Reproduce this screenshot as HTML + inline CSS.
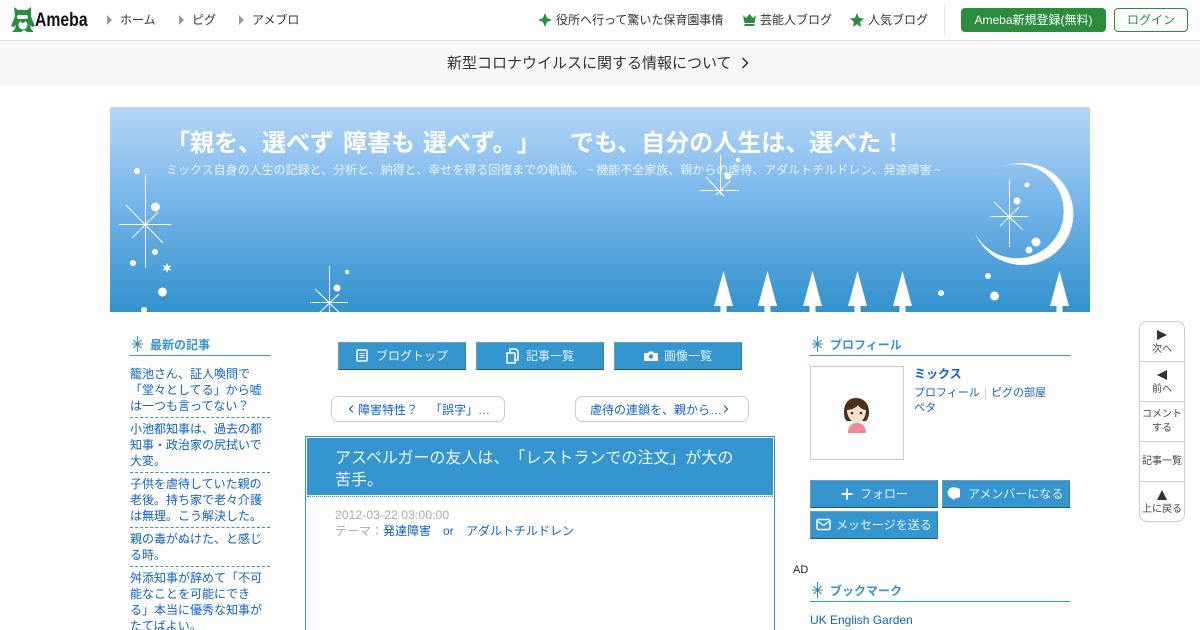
<!DOCTYPE html>
<html lang="ja"><head><meta charset="utf-8"><title>アスペルガーの友人は</title>
<style>
html,body{margin:0;padding:0;background:#fff;width:1200px;height:630px;overflow:hidden}
body{position:relative;font-family:"Liberation Sans","WenQuanYi Zen Hei","Noto Sans CJK JP",sans-serif;font-size:12px;color:#333;text-spacing-trim:space-all}
.t{position:absolute;white-space:nowrap;line-height:16px}
.a{position:absolute}
.l{color:#0e63c9}
.btn{position:absolute;box-sizing:border-box;height:28px;background:#3595cf;border:1px solid #6f9db9;border-bottom-color:#24566f;border-right-color:#4b7a94;color:#e8f3fa;line-height:26px;text-align:center;white-space:nowrap}
.hd{position:absolute;border-bottom:1px solid #3595cf;height:22px;line-height:20px;font-weight:bold;color:#3595cf}
.pn{position:absolute;box-sizing:border-box;top:396px;height:26px;width:174px;border:1px solid #ccc;border-radius:7px}
.dash{position:absolute;left:130px;width:140px;border-top:1px dashed #3595cf}
.c{position:absolute;left:1139px;width:46px;text-align:center;font-size:10px;line-height:14px;color:#444}
.s{position:absolute;left:1140px;width:44px;height:1px;background:#ccc}
.w{display:inline-block;width:12px;text-align:center}
</style></head><body>

<!-- header -->
<div class="a" style="left:0;top:40px;width:1200px;height:1px;background:#dedede"></div>
<div class="a" style="left:0;top:41px;width:1200px;height:44px;background:#f7f7f7"></div>
<svg class="a" style="left:11px;top:6px" width="24" height="28" viewBox="0 0 24 28">
<path fill="#2a8c3c" d="M3 1l4 3h9l4-3v9l1 3 3 7-3 1-2-2 1 4 3 3h-7l-3-2-3 2H1l3-3 1-4-2 2-3-1 3-7 1-3z"/>
<circle cx="12" cy="19" r="4.500" fill="#fff"/><rect x="6" y="9" width="11" height="4" rx="2" fill="#fff"/><circle cx="12" cy="15" r="2" fill="#2a8c3c"/>
</svg>
<div class="t" style="left:35px;top:10px;font-size:19px;line-height:22px;font-weight:bold;color:#111;transform:scaleX(.83);transform-origin:0 0">Ameba</div>
<svg class="a" style="left:0;top:0" width="300" height="40"><path fill="#999" d="M107 15l5 5-5 5zM179 15l5 5-5 5zM239 15l5 5-5 5z"/></svg>
<div class="t" style="left:120px;top:12px">ホーム</div>
<div class="t" style="left:192px;top:12px">ピグ</div>
<div class="t" style="left:252px;top:12px">アメブロ</div>
<svg class="a" style="left:530px;top:0" width="340" height="40"><path fill="#2a8c3c" d="M15 13l2 5 5 2-5 2-2 5-2-5-5-2 5-2zM213 15l3 3 3.500-4 3.500 4 3-3-1.500 8h-10zM214.500 24h10v2h-10zM327 13l2 5 5 .5-4 3.500 1.200 5-4.200-2.800-4.200 2.800 1.200-5-4-3.500 5-.5z"/></svg>
<div class="t" style="left:556px;top:12px">役所へ行って驚いた保育園事情</div>
<div class="t" style="left:760px;top:12px">芸能人ブログ</div>
<div class="t" style="left:868px;top:12px">人気ブログ</div>
<div class="a" style="left:944px;top:4px;width:1px;height:32px;background:#e6e6e6"></div>
<div class="a" style="left:961px;top:8px;width:145px;height:24px;background:#2a8c3c;border-radius:4px;color:#fff;text-align:center;line-height:24px;white-space:nowrap">Ameba新規登録(無料)</div>
<div class="a" style="left:1114px;top:8px;width:72px;height:22px;border:1px solid #2a8c3c;border-radius:4px;color:#2a8c3c;text-align:center;line-height:22px">ログイン</div>
<div class="t" style="left:447px;top:54px;font-size:15px;line-height:20px;color:#333">新型コロナウイルスに関する情報について</div>
<svg class="a" style="left:738px;top:55px" width="14" height="16"><path d="M4.500 3l5 5-5 5" fill="none" stroke="#333" stroke-width="1.500"/></svg>

<!-- banner -->
<svg class="a" style="left:0;top:0" width="1200" height="320">
<defs><linearGradient id="g" x1="0" y1="0" x2="0" y2="1"><stop offset="0" stop-color="#b5d6f9"/><stop offset=".5" stop-color="#71b3e8"/><stop offset="1" stop-color="#3292cd"/></linearGradient>
<clipPath id="cb"><rect x="110" y="107" width="980" height="205"/></clipPath></defs>
<rect x="110" y="107" width="980" height="205" fill="url(#g)"/>
<g clip-path="url(#cb)">
<g stroke="#fff" stroke-width="1" fill="none">
<path d="M145.500 174V268M119 224.500H171M126 205L163 243M132 238L158 212"/>
<path d="M329.500 266V330M310 302.500H348M315 289L345 318M339 294L318 314"/>
<path d="M720.500 155V195M700 190.500H739M706 177L724 196M730 181L716 195"/>
<path d="M1009.500 179V247M990 216.500H1028M994 202L1023 230M1000 226L1019 207"/>
</g>
<g fill="#fff">
<circle cx="137" cy="171" r="3"/><circle cx="155.500" cy="207" r="4.500"/><circle cx="155" cy="252" r="3"/><circle cx="133" cy="263" r="3"/><circle cx="162.500" cy="292" r="4.500"/><circle cx="144" cy="310" r="3"/>
<path d="M167 263l1.200 3 3.200-.6-2.200 2.500 2.200 2.600-3.200-.7-1.200 3-1.200-3-3.200.7 2.200-2.600-2.200-2.500 3.200.6z"/>
<circle cx="337" cy="288" r="3.500"/><circle cx="347" cy="272" r="2.200"/>
<circle cx="728" cy="176" r="3.500"/><circle cx="738" cy="160" r="2.200"/>
<path d="M995 169.500Q1009 163 1022 163A51 51 0 1 1 975 233A47 47 0 1 0 995 169.500z"/>
<circle cx="1027" cy="185" r="2.500"/><circle cx="1017" cy="201" r="3.500"/><circle cx="1036" cy="242" r="4.500"/><circle cx="1029" cy="250" r="3.500"/><circle cx="988" cy="276" r="3"/><circle cx="994.500" cy="296" r="4.500"/><circle cx="941" cy="293" r="3"/>
<path d="M723.500 271l9.500 35h-6.500v6h-6v-6H714zM767.500 271l9.500 35h-6.500v6h-6v-6H758zM812.500 271l9.500 35h-6.500v6h-6v-6H803zM857.500 271l9.500 35h-6.500v6h-6v-6H848zM902.500 271l9.500 35h-6.500v6h-6v-6H893zM1059.500 271l9.500 35h-6.500v6h-6v-6H1050z"/>
</g></g></svg>
<div class="t" style="left:166px;top:128px;font-size:24px;line-height:32px;font-weight:bold;color:#fff">「親を、選べず</div>
<div class="t" style="left:343px;top:128px;font-size:24px;line-height:32px;font-weight:bold;color:#fff">障害も</div>
<div class="t" style="left:423px;top:128px;font-size:24px;line-height:32px;font-weight:bold;color:#fff">選べず。」</div>
<div class="t" style="left:570px;top:128px;font-size:24px;line-height:32px;font-weight:bold;color:#fff">でも、自分の人生は、選べた！</div>
<div class="t" style="left:166px;top:162px;color:#e6f2fc">ミックス自身の人生の記録と、分析と、納得と、幸せを得る回復までの軌跡。<span class="w">~</span>機能不全家族、親からの虐待、アダルトチルドレン、発達障害<span class="w">~</span></div>

<!-- left column -->
<svg class="a" style="left:0;top:330px" width="1100" height="280"><g stroke="#2f8db5" stroke-width="1" fill="none"><path d="M137.500 6V22M132 14H143M133.500 10L141.500 18M141.500 10L133.500 18"/><path d="M817.500 6V22M812 14H823M813.500 10L821.500 18M821.500 10L813.500 18"/><path d="M817.500 252V268M812 260H823M813.500 256L821.500 264M821.500 256L813.500 264"/></g></svg>
<div class="hd" style="left:130px;top:333px;width:140px;text-indent:20px;line-height:24px">最新の記事</div>
<div class="t l" style="left:130px;top:366px">籠池さん、証人喚問で<br>「堂々としてる」から嘘<br>は一つも言ってない？</div>
<div class="dash" style="top:417px"></div>
<div class="t l" style="left:130px;top:421px">小池都知事は、過去の都<br>知事・政治家の尻拭いで<br>大変。</div>
<div class="dash" style="top:472px"></div>
<div class="t l" style="left:130px;top:476px">子供を虐待していた親の<br>老後。持ち家で老々介護<br>は無理。こう解決した。</div>
<div class="dash" style="top:527px"></div>
<div class="t l" style="left:130px;top:531px">親の毒がぬけた、と感じ<br>る時。</div>
<div class="dash" style="top:566px"></div>
<div class="t l" style="left:130px;top:570px">舛添知事が辞めて「不可<br>能なことを可能にでき<br>る」本当に優秀な知事が<br>たてばよい。</div>

<!-- center -->
<div class="btn" style="left:338px;top:342px;width:128px"></div>
<div class="btn" style="left:476px;top:342px;width:128px"></div>
<div class="btn" style="left:614px;top:342px;width:128px"></div>
<div class="t" style="left:376px;top:348px;color:#e8f3fa">ブログトップ</div>
<div class="t" style="left:526px;top:348px;color:#e8f3fa">記事一覧</div>
<div class="t" style="left:664px;top:348px;color:#e8f3fa">画像一覧</div>
<svg class="a" style="left:350px;top:345px" width="390" height="22" fill="none" stroke="#fff" stroke-width="1.500">
<rect x="7" y="5" width="10" height="11" rx="1"/><path d="M9.500 8.500h5M9.500 10.500h5M9.500 12.500h5" stroke-width="1"/>
<path d="M157 8h7a1 1 0 0 1 1 1v9h-8zM160 8V4h6l2 2v9h-3"/>
<path fill="#fff" stroke="none" d="M295 8h3l1-1.500h4l1 1.500h3a1 1 0 0 1 1 1v6a1 1 0 0 1-1 1h-12a1 1 0 0 1-1-1v-6a1 1 0 0 1 1-1z"/><circle cx="301" cy="11.500" r="2.200" fill="#3595cf" stroke="none"/>
</svg>
<div class="pn" style="left:331px"></div>
<div class="pn" style="left:575px"></div>
<svg class="a" style="left:345px;top:402px" width="390" height="14" fill="none" stroke="#0e63c9" stroke-width="1.200"><path d="M8 3.500L4.500 7 8 10.500M379 3.500L382.500 7 379 10.500"/></svg>
<div class="t l" style="left:358px;top:402px">障害特性？　「誤字」…</div>
<div class="t l" style="left:590px;top:402px">虐待の連鎖を、親から…</div>
<div class="a" style="left:305px;top:436px;width:468px;height:200px;border:1px solid #3595cf"></div>
<div class="a" style="left:307px;top:438px;width:466px;height:57px;background:#3595cf"></div>
<div class="a" style="left:307px;top:496px;width:466px;border-top:1px dotted #3595cf"></div>
<div class="t" style="left:335px;top:448px;font-size:16px;line-height:22px;color:#eef6fb">アスペルガーの友人は、「レストランでの注文」が大の<br>苦手。</div>
<div class="t" style="left:335px;top:507px;color:#aaa;letter-spacing:.15px">2012-03-22 03:00:00</div>
<div class="t" style="left:335px;top:523px;color:#aaa">テーマ：</div>
<div class="t l" style="left:383px;top:523px">発達障害</div>
<div class="t l" style="left:443px;top:523px">or</div>
<div class="t l" style="left:466px;top:523px">アダルトチルドレン</div>

<!-- right -->
<div class="hd" style="left:810px;top:333px;width:260px;text-indent:20px;line-height:24px">プロフィール</div>
<div class="a" style="left:810px;top:366px;width:92px;height:92px;border:1px solid #ccc"></div>
<svg class="a" style="left:838px;top:395px" width="38" height="40">
<path fill="#f08a9a" d="M10 38c0-7 4-10 9-10s9 3 9 10z"/>
<path fill="#4a3020" d="M18 3c-8 0-12 6-12 14 0 5 1 8 3 9l19 0c2-2 3-5 3-9 0-8-5-14-13-14z"/>
<path fill="#fbe0cc" d="M9 15c4 0 9-2 11-5 2 3 5 5 8 5 0 7-4 13-9 13s-10-6-10-13z"/>
<circle cx="14" cy="18" r="1.300" fill="#333"/><circle cx="23" cy="18" r="1.300" fill="#333"/>
</svg>
<div class="t l" style="left:914px;top:366px;font-weight:bold">ミックス</div>
<div class="t l" style="left:914px;top:385px;font-size:11px">プロフィール</div>
<div class="a" style="left:985px;top:388px;width:1px;height:11px;background:#ccc"></div>
<div class="t l" style="left:991px;top:385px;font-size:11px">ピグの部屋</div>
<div class="t l" style="left:914px;top:400px;font-size:11px">ペタ</div>
<div class="btn" style="left:810px;top:480px;width:128px"></div>
<div class="btn" style="left:942px;top:480px;width:128px"></div>
<div class="btn" style="left:810px;top:511px;width:128px"></div>
<div class="t" style="left:860px;top:486px;color:#e8f3fa">フォロー</div>
<div class="t" style="left:968px;top:486px;color:#e8f3fa">アメンバーになる</div>
<div class="t" style="left:836px;top:517px;color:#e8f3fa">メッセージを送る</div>
<svg class="a" style="left:810px;top:480px" width="150" height="60" fill="none" stroke="#fff">
<path d="M37 8.500v11M31.500 14h11" stroke-width="2"/>
<path fill="#fff" stroke="none" d="M145 7.500a7 5.500 0 0 1 0 11l-1 0 1 2-3.500-2.300a5.500 5.500 0 0 1 3.500-10.700z"/>
<rect x="7" y="39.500" width="13" height="10" rx="1.500" stroke-width="1.500"/><path d="M8 41.500l5.500 4 5.500-4" stroke-width="1.200"/>
</svg>
<div class="t" style="left:793px;top:562px;font-size:11px;color:#222">AD</div>
<div class="hd" style="left:810px;top:579px;width:260px;text-indent:20px;line-height:24px">ブックマーク</div>
<div class="t l" style="left:810px;top:612px">UK English Garden</div>

<!-- floating -->
<div class="a" style="left:1139px;top:321px;width:44px;height:199px;border:1px solid #ccc;border-radius:8px"></div>
<div class="s" style="top:361px"></div><div class="s" style="top:401px"></div><div class="s" style="top:441px"></div><div class="s" style="top:481px"></div>
<svg class="a" style="left:1139px;top:321px" width="46" height="190" fill="#333"><path d="M18 9l10 5-10 5zM28 49v10l-10-5zM23 169l5 10H18z"/></svg>
<div class="c" style="top:343px">次へ</div>
<div class="c" style="top:383px">前へ</div>
<div class="c" style="top:408px">コメント<br>する</div>
<div class="c" style="top:455px">記事一覧</div>
<div class="c" style="top:503px">上に戻る</div>
</body></html>
